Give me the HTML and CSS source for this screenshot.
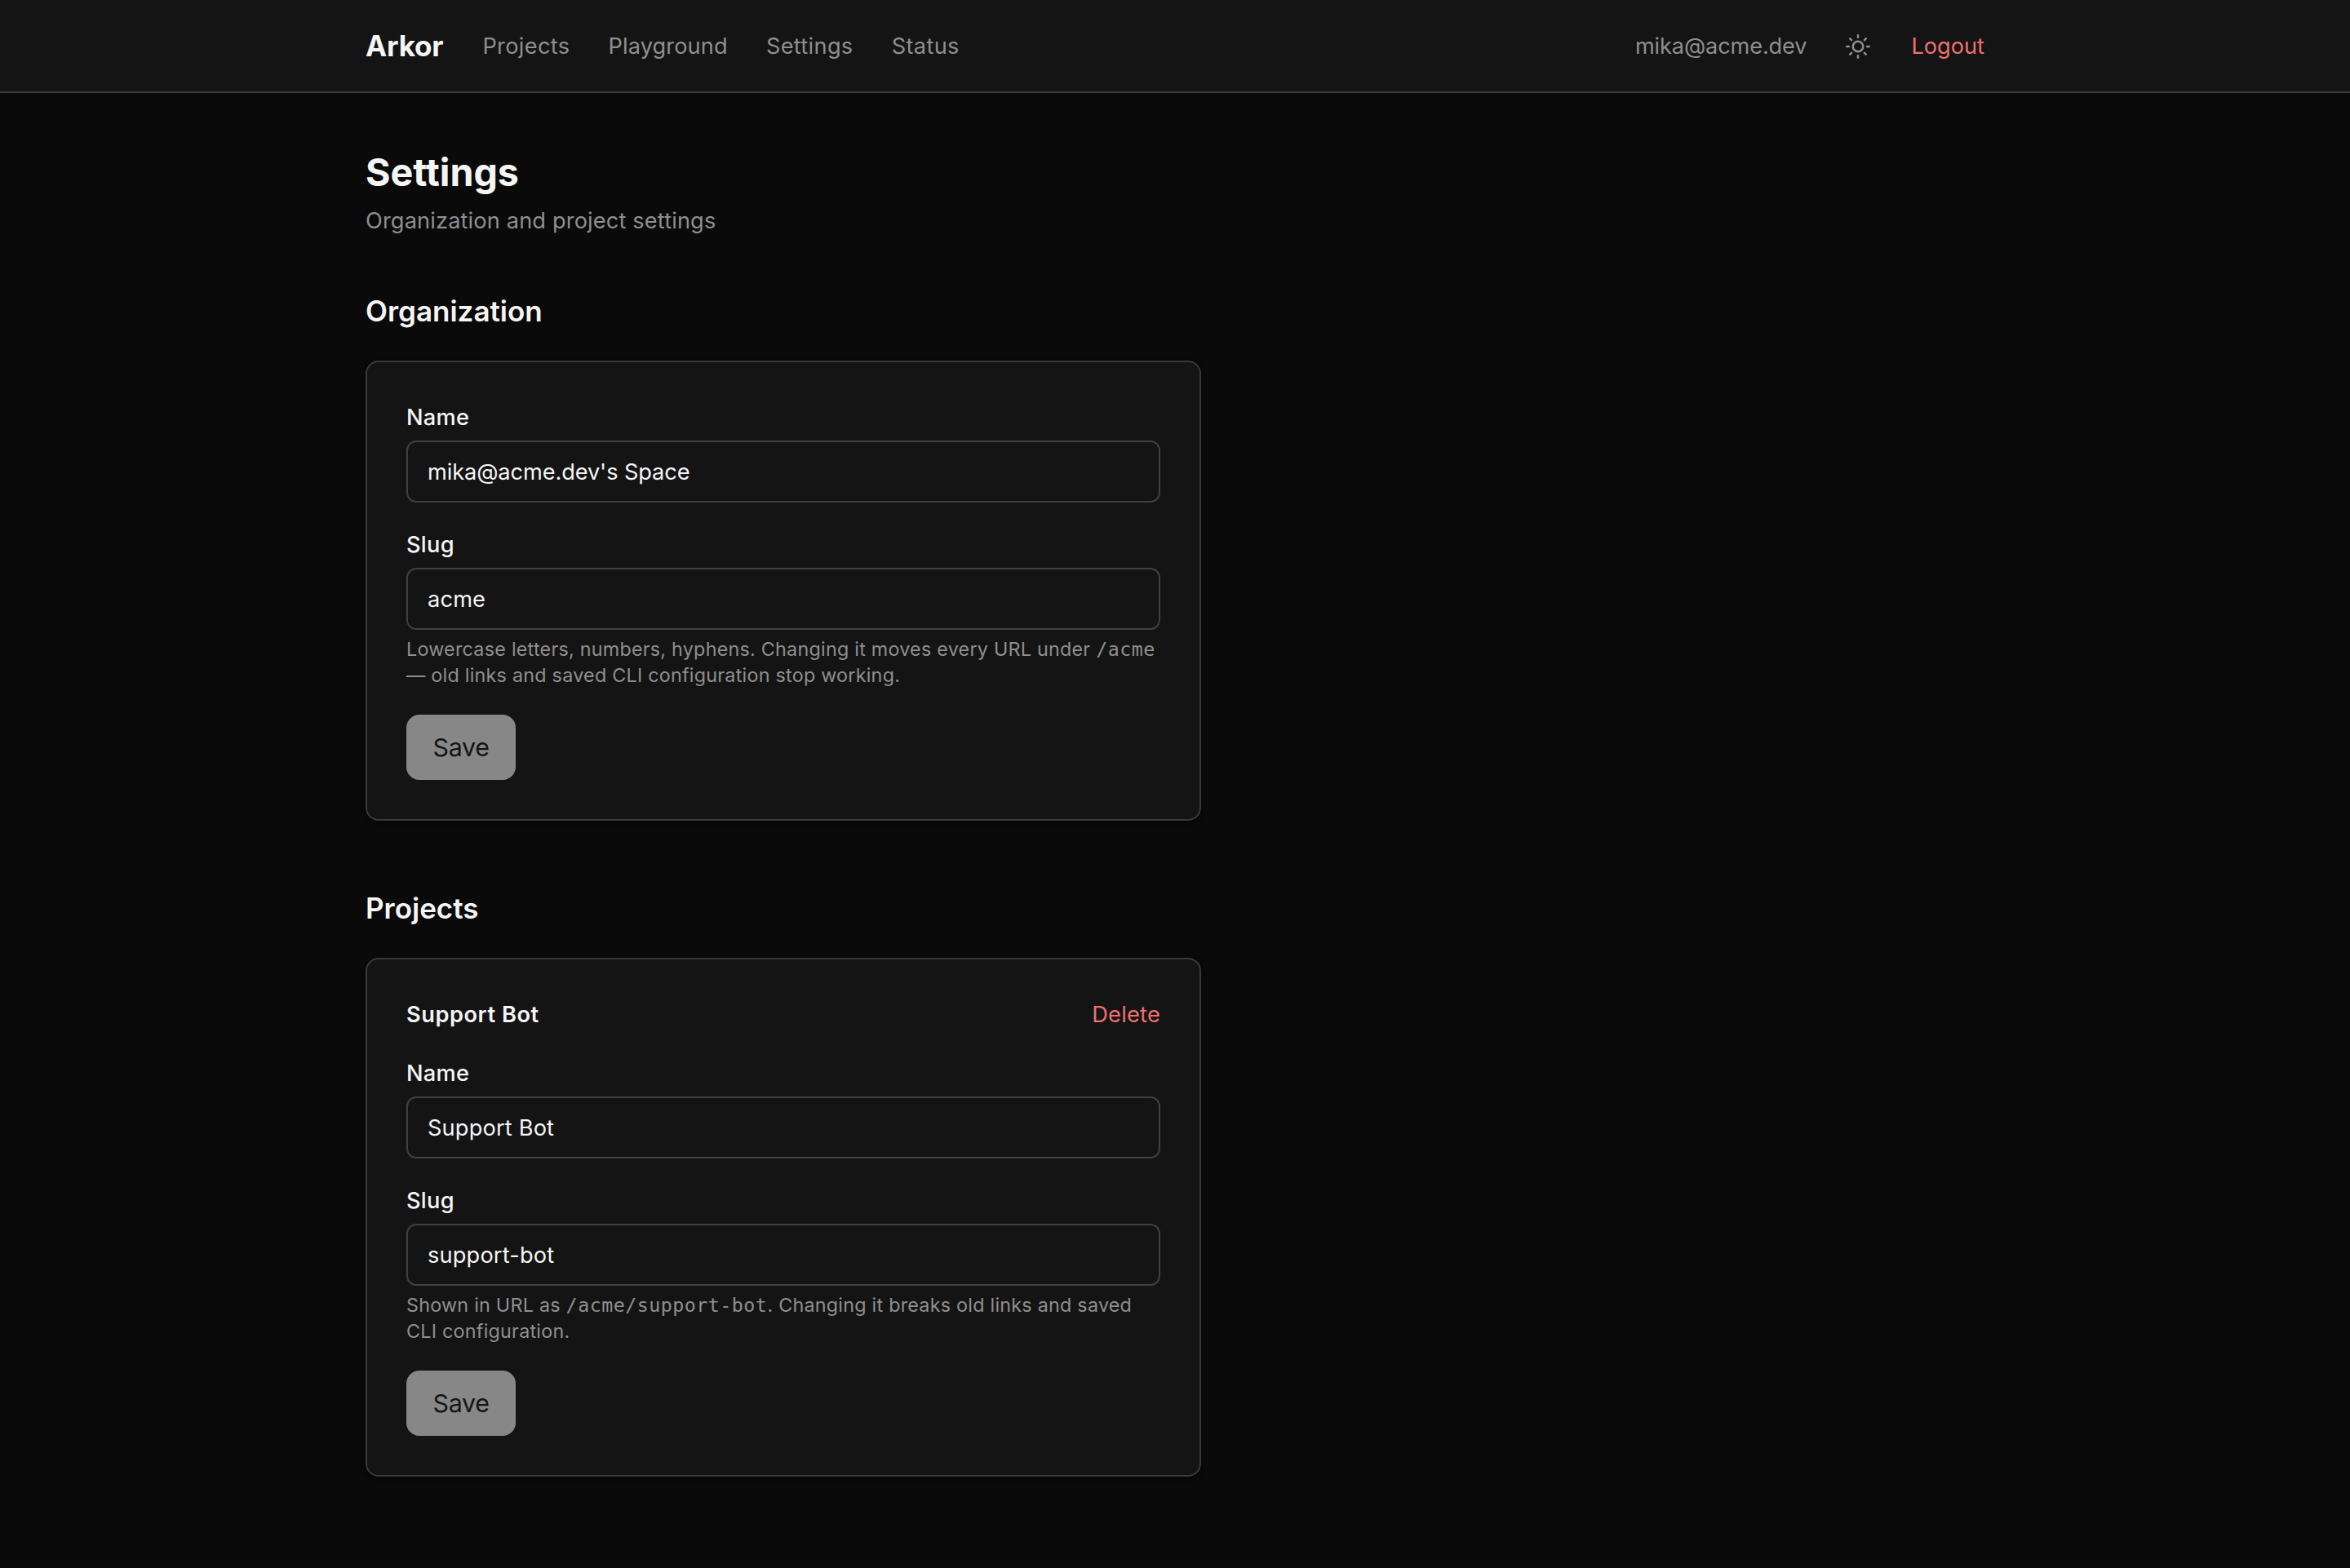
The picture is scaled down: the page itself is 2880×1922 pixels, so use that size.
FILE: index.html
```
<!DOCTYPE html>
<html lang="en">
<head>
<meta charset="utf-8">
<title>Settings – Arkor</title>
<link rel="stylesheet" href="styles.css">
</head>
<body>
<header class="topbar">
  <div class="container topbar-inner">
    <div class="topbar-left">
      <a class="brand">Arkor</a>
      <nav class="nav">
        <a class="nav-link">Projects</a>
        <a class="nav-link nav-link-playground">Playground</a>
        <a class="nav-link">Settings</a>
        <a class="nav-link">Status</a>
      </nav>
    </div>
    <div class="topbar-right">
      <span class="email">mika@acme.dev</span>
      <svg class="sun" viewBox="0 0 24 24" fill="none" stroke="currentColor" stroke-width="2" stroke-linecap="round" stroke-linejoin="round" aria-label="Toggle theme">
        <circle cx="12" cy="12" r="5"/>
        <path d="M12 1v2M12 21v2M4.22 4.22l1.42 1.42M18.36 18.36l1.42 1.42M1 12h2M21 12h2M4.22 19.78l1.42-1.42M18.36 5.64l1.42-1.42"/>
      </svg>
      <a class="logout">Logout</a>
    </div>
  </div>
</header>
<main class="container main">
  <div class="page-head">
    <h1 class="page-title">Settings</h1>
    <p class="page-subtitle">Organization and project settings</p>
  </div>
  <section class="section">
    <h2 class="section-title">Organization</h2>
    <form class="card">
      <div class="field">
        <label class="label" for="org-name">Name</label>
        <input class="input" id="org-name" type="text" value="mika@acme.dev's Space">
      </div>
      <div class="field">
        <label class="label" for="org-slug">Slug</label>
        <input class="input input-slug" id="org-slug" type="text" value="acme">
        <p class="hint">Lowercase letters, numbers, hyphens. Changing it moves every URL under <code class="code">/acme</code> — old links and saved CLI configuration stop working.</p>
      </div>
      <button class="save" type="button" disabled>Save</button>
    </form>
  </section>
  <section class="section">
    <h2 class="section-title">Projects</h2>
    <form class="card">
      <div class="card-head">
        <h3 class="card-title">Support Bot</h3>
        <a class="delete">Delete</a>
      </div>
      <div class="field">
        <label class="label" for="project-name">Name</label>
        <input class="input input-slug" id="project-name" type="text" value="Support Bot">
      </div>
      <div class="field">
        <label class="label" for="project-slug">Slug</label>
        <input class="input input-slug" id="project-slug" type="text" value="support-bot">
        <p class="hint">Shown in URL as <code class="code">/acme/support-bot</code>. Changing it breaks old links and saved CLI configuration.</p>
      </div>
      <button class="save" type="button" disabled>Save</button>
    </form>
  </section>
</main>
</body>
</html>
```
FILE: styles.css
```
:root {
  --bg: #0a0a0a;
  --surface: #141414;
  --border: #3a3a3a;
  --text: #f5f5f5;
  --muted: #8f8f8f;
  --danger: #f07070;
}

* {
  box-sizing: border-box;
  margin: 0;
}

body {
  min-height: 1922px;
  background: var(--bg);
  color: var(--text);
  font-family: Inter, "Liberation Sans", sans-serif;
  font-size: 27.2px;
  line-height: 40px;
}

.container {
  width: 2048px;
  margin: 0 auto;
  padding: 0 32px;
}

/* Top bar */
.topbar {
  background: var(--surface);
  border-bottom: 2px solid var(--border);
}

.topbar-inner {
  display: flex;
  align-items: center;
  justify-content: space-between;
  height: 112px;
}

.topbar-left {
  display: flex;
  align-items: center;
  gap: 48px;
}

.brand {
  font-size: 35px;
  font-weight: 700;
  line-height: 56px;
  letter-spacing: -0.15px;
}

.nav {
  display: flex;
  gap: 47.2px;
  padding-top: 2px;
}

.nav-link {
  color: var(--muted);
  letter-spacing: 0.32px;
}

.nav-link-playground {
  letter-spacing: 0.1px;
}

.topbar-right {
  display: flex;
  align-items: center;
  gap: 48px;
  padding-top: 2px;
}

.email {
  color: var(--muted);
  letter-spacing: -0.15px;
}

.sun {
  width: 30px;
  height: 30px;
  margin-right: 2px;
  color: var(--muted);
}

.logout,
.delete {
  color: var(--danger);
}

.delete {
  letter-spacing: 0.22px;
}

/* Page */
.main {
  padding-top: 65px;
  padding-bottom: 64px;
}

.page-head {
  display: flex;
  flex-direction: column;
  gap: 8px;
  margin-bottom: 62px;
}

.page-title {
  font-size: 46.6px;
  font-weight: 700;
  line-height: 64px;
}

.page-subtitle {
  color: var(--muted);
  letter-spacing: 0.14px;
}

.section + .section {
  margin-top: 79px;
}

.section-title {
  margin-bottom: 33px;
  font-size: 35px;
  font-weight: 600;
  line-height: 56px;
}

/* Cards and forms */
.card {
  display: flex;
  flex-direction: column;
  align-items: stretch;
  gap: 32px;
  width: 1024px;
  padding: 48px;
  background: var(--surface);
  border: 2px solid var(--border);
  border-radius: 16px;
  box-shadow: 0 2px 6px rgba(0, 0, 0, 0.3), 0 2px 4px -2px rgba(0, 0, 0, 0.3);
}

.card-head {
  display: flex;
  align-items: center;
  justify-content: space-between;
}

.card-title {
  font-size: 27.2px;
  font-weight: 600;
  line-height: 40px;
  letter-spacing: 0.55px;
}

.field {
  display: flex;
  flex-direction: column;
  gap: 8px;
}

.label {
  font-weight: 500;
  letter-spacing: 0.3px;
}

.input {
  height: 76px;
  padding: 0 24px;
  background: transparent;
  border: 2px solid #404040;
  border-radius: 12px;
  color: var(--text);
  font: inherit;
  letter-spacing: -0.1px;
}

.input-slug {
  letter-spacing: 0.17px;
}

.hint {
  color: var(--muted);
  font-size: 23.3px;
  line-height: 32px;
  letter-spacing: 0.25px;
}

.code {
  font-family: "DejaVu Sans Mono", "Liberation Mono", monospace;
  font-size: 23.3px;
  line-height: 1;
  letter-spacing: 0.49px;
}

.save {
  align-self: flex-start;
  width: 134px;
  height: 80px;
  padding: 0;
  background: #878787;
  border: 0;
  border-radius: 16px;
  color: #141414;
  font-family: inherit;
  font-size: 30.4px;
  letter-spacing: -0.3px;
}
```
